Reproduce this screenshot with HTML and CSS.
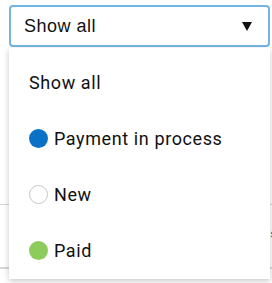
FILE: index.html
```html
<!DOCTYPE html>
<html lang="en">
<head>
    <meta charset="UTF-8">
    <meta name="viewport" content="width=device-width, initial-scale=1.0">
    <title>Status filter</title>
    <link rel="stylesheet" href="styles.css">
</head>
<body>
    <div class="table">
        <div class="row row-first">
            <span class="cell-left">Receipt</span>
        </div>
        <div class="row row-second">
            <span class="cell-right">s</span>
        </div>
        <div class="row"></div>
    </div>

    <div class="filter">
        <div class="select">
            <span>Show all</span>
            <svg class="arrow" width="10" height="9" viewBox="0 0 10 9">
                <path d="M0 0 H10 L5 9 Z" fill="#111"/>
            </svg>
        </div>
        <ul class="menu">
            <li class="item">Show all</li>
            <li class="item"><span class="dot dot-process"></span>Payment in process</li>
            <li class="item"><span class="dot dot-new"></span>New</li>
            <li class="item"><span class="dot dot-paid"></span>Paid</li>
        </ul>
    </div>
</body>
</html>
```

FILE: styles.css
```css
body {
    margin: 0;
    width: 272px;
    height: 283px;
    overflow: hidden;
    background: #fff;
    font-family: Roboto, "Liberation Sans", sans-serif;
}
.table {
    width: 272px;
}
.row {
    display: flex;
    align-items: center;
    border-bottom: 1px solid #d6d6d6;
    overflow: hidden;
}
.row-first {
    height: 204px;
    align-items: flex-end;
}
.row-second {
    height: 62px;
    justify-content: flex-end;
}
.cell-left {
    font-size: 12px;
    font-weight: bold;
    color: #333;
    margin-left: -41px;
    margin-bottom: 42px;
    white-space: nowrap;
}
.cell-right {
    font-size: 12px;
    font-weight: bold;
    color: #333;
    margin-right: -5px;
    margin-top: -4px;
}
.filter {
    position: absolute;
    top: 5px;
    left: 9px;
    width: 261px;
}
.select {
    height: 42px;
    box-sizing: border-box;
    border: 2px solid #74b4e2;
    border-radius: 4px;
    background: #fff;
    display: flex;
    align-items: center;
    justify-content: space-between;
    padding: 0 16px 0 13px;
    font-family: "Liberation Sans", Arial, sans-serif;
    font-size: 18px;
    letter-spacing: 0.5px;
    color: #111;
}
.arrow {
    display: block;
}
.menu {
    list-style: none;
    margin: 1px 0 0;
    padding: 6px 0 1px;
    background: #fff;
    box-shadow: 0 2px 6px rgba(0, 0, 0, 0.22);
}
.item {
    height: 56px;
    display: flex;
    align-items: center;
    padding-left: 20px;
    font-size: 18px;
    letter-spacing: 0.6px;
    color: #111;
}
.dot {
    width: 19px;
    height: 19px;
    border-radius: 50%;
    margin-right: 6px;
    box-sizing: border-box;
    flex-shrink: 0;
}
.dot-process { background: #0a72c6; }
.dot-new { border: 1px solid #c8c8c8; background: #fff; }
.dot-paid { background: #8ccb5c; }
```
